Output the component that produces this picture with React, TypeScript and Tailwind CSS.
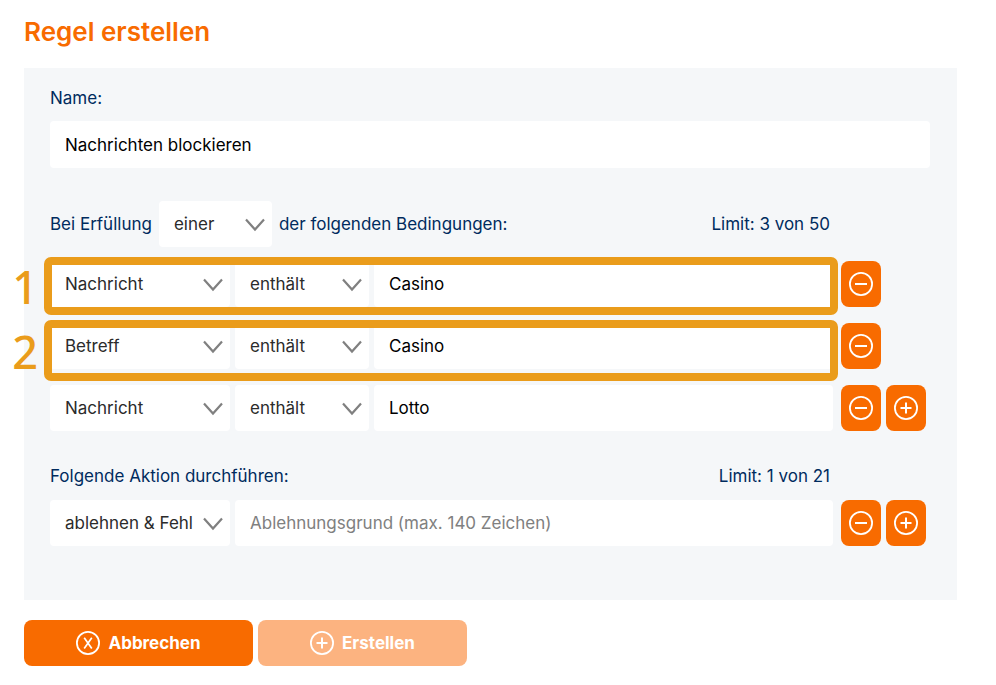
import React from "react";

type IconKind = "minus" | "plus" | "close";

function CircleIcon({ kind }: { kind: IconKind }) {
  return (
    <svg viewBox="0 0 24 24" className="size-6 shrink-0" fill="none" stroke="currentColor" aria-hidden="true">
      <circle cx="12" cy="12" r="11.1" strokeWidth="1.8" />
      {kind === "minus" && <path d="M6 12h12" strokeWidth="2" />}
      {kind === "plus" && <path d="M6.5 12h11M12 6.5v11" strokeWidth="2" />}
      {kind === "close" && <path d="M8.2 6.8l7.6 10.6M15.8 6.8L8.2 17.4" strokeWidth="1.7" />}
    </svg>
  );
}

function IconButton({ kind, label }: { kind: IconKind; label: string }) {
  return (
    <button
      type="button"
      aria-label={label}
      className="flex h-[46px] w-10 items-center justify-center rounded-lg bg-[#f86b00] text-white"
    >
      <CircleIcon kind={kind} />
    </button>
  );
}

function Select({ label, value, options, width }: { label: string; value: string; options: string[]; width: string }) {
  return (
    <div className={`relative shrink-0 ${width}`}>
      <select
        aria-label={label}
        defaultValue={value}
        className="h-[46px] w-full appearance-none rounded bg-white pr-8 pl-[15px] text-[#2b2b2b]"
      >
        {options.map((o) => (
          <option key={o}>{o}</option>
        ))}
      </select>
      <svg
        viewBox="0 0 20 14"
        className="pointer-events-none absolute top-[17px] right-[7px] h-3.5 w-5"
        fill="none"
        stroke="#808080"
        strokeWidth="2.2"
        aria-hidden="true"
      >
        <path d="M1 1.5l9 10 9-10" />
      </svg>
    </div>
  );
}

function Marker({ text, box }: { text: string; box: string }) {
  return (
    <div className={`pointer-events-none absolute -right-[5px] -left-1.5 rounded-[7px] border-8 border-[#ea9c1b] ${box}`}>
      <span className="absolute top-1/2 right-full mr-3.5 -translate-y-1/2 font-['Noto_Sans',sans-serif] text-[45px] leading-none font-medium text-[#ea9c1b]">
        {text}
      </span>
    </div>
  );
}

const conditions = [
  { field: "Nachricht", value: "Casino", marker: "1", box: "-top-1 -bottom-2" },
  { field: "Betreff", value: "Casino", marker: "2", box: "-top-[3px] -bottom-3" },
  { field: "Nachricht", value: "Lotto", marker: "", box: "" },
];

export default function App() {
  return (
    <main className="bg-white pt-4 pr-[39px] pb-5 pl-6 font-[Inter,'Liberation_Sans',sans-serif] text-[17px] leading-6 text-[#002b5e]">
      <h1 className="text-[26px] leading-8 font-semibold text-[#f86b00]">Regel erstellen</h1>

      <form onSubmit={(e) => e.preventDefault()}>
        <div className="mt-5 bg-[#f5f7f9] pt-[18px] pr-[27px] pb-[54px] pl-[26px]">
          <label htmlFor="name" className="block">
            Name:
          </label>
          <input
            id="name"
            type="text"
            defaultValue="Nachrichten blockieren"
            className="mt-[11px] h-[47px] w-full rounded bg-white px-[15px] text-black"
          />

          <div className="mt-[33px] flex items-center pr-[100px]">
            <span>Bei Erfüllung</span>
            <div className="mx-[7px]">
              <Select label="Verknüpfung" value="einer" options={["einer", "aller"]} width="w-[113px]" />
            </div>
            <span>der folgenden Bedingungen:</span>
            <span className="ml-auto">Limit: 3 von 50</span>
          </div>

          <div className="mt-3.5 flex flex-col gap-4">
            {conditions.map((c, i) => (
              <div key={i} className="flex gap-2">
                <div className="relative flex min-w-0 flex-1 gap-[5px]">
                  <Select label="Feld" value={c.field} options={["Nachricht", "Betreff"]} width="w-[180px]" />
                  <Select label="Vergleich" value="enthält" options={["enthält"]} width="w-[134px]" />
                  <input
                    type="text"
                    aria-label="Suchbegriff"
                    defaultValue={c.value}
                    className="h-[46px] min-w-0 flex-1 rounded bg-white px-[15px] text-black"
                  />
                  {c.marker && <Marker text={c.marker} box={c.box} />}
                </div>
                <div className="flex w-[89px] shrink-0 gap-[5px]">
                  <IconButton kind="minus" label="Bedingung entfernen" />
                  {i === conditions.length - 1 && <IconButton kind="plus" label="Bedingung hinzufügen" />}
                </div>
              </div>
            ))}
          </div>

          <div className="mt-[33px] flex justify-between pr-[100px]">
            <span>Folgende Aktion durchführen:</span>
            <span>Limit: 1 von 21</span>
          </div>
          <div className="mt-3 flex gap-2">
            <div className="flex min-w-0 flex-1 gap-[5px]">
              <Select label="Aktion" value="ablehnen & Fehl" options={["ablehnen & Fehl"]} width="w-[180px]" />
              <input
                type="text"
                aria-label="Ablehnungsgrund"
                placeholder="Ablehnungsgrund (max. 140 Zeichen)"
                className="h-[46px] min-w-0 flex-1 rounded bg-white px-[15px] text-black placeholder:text-[#808080]"
              />
            </div>
            <div className="flex w-[89px] shrink-0 gap-[5px]">
              <IconButton kind="minus" label="Aktion entfernen" />
              <IconButton kind="plus" label="Aktion hinzufügen" />
            </div>
          </div>
        </div>

        <div className="mt-5 flex gap-[5px] font-bold text-white">
          <button type="button" className="flex h-[46px] w-[229px] items-center justify-center gap-2 rounded-lg bg-[#f86b00]">
            <CircleIcon kind="close" />
            Abbrechen
          </button>
          <button
            type="submit"
            disabled
            className="flex h-[46px] w-[209px] items-center justify-center gap-2 rounded-lg bg-[#fcb380]"
          >
            <CircleIcon kind="plus" />
            Erstellen
          </button>
        </div>
      </form>
    </main>
  );
}
